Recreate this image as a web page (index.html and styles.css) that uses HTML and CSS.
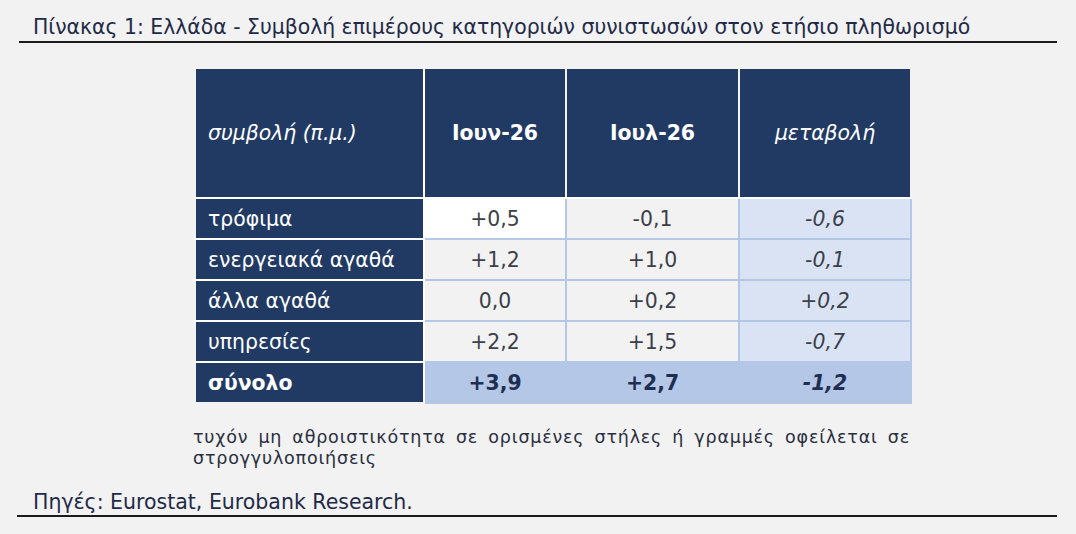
FILE: index.html
```html
<!DOCTYPE html>
<html lang="el">
<head>
<meta charset="utf-8">
<title>Πίνακας 1</title>
<link rel="stylesheet" href="styles.css">
</head>
<body>
<div class="page">
  <div class="title">Πίνακας 1: Ελλάδα - Συμβολή επιμέρους κατηγοριών συνιστωσών στον ετήσιο πληθωρισμό</div>
  <table class="data">
    <colgroup>
      <col class="c1"><col class="c2"><col class="c3"><col class="c4">
    </colgroup>
    <thead>
      <tr>
        <th class="lab it">συμβολή (π.μ.)</th>
        <th class="bold">Ιουν-26</th>
        <th class="bold">Ιουλ-26</th>
        <th class="it">μεταβολή</th>
      </tr>
    </thead>
    <tbody>
      <tr>
        <th class="lab">τρόφιμα</th>
        <td class="v2 first">+0,5</td>
        <td class="v3">-0,1</td>
        <td class="v4">-0,6</td>
      </tr>
      <tr>
        <th class="lab">ενεργειακά αγαθά</th>
        <td class="v2">+1,2</td>
        <td class="v3">+1,0</td>
        <td class="v4">-0,1</td>
      </tr>
      <tr>
        <th class="lab">άλλα αγαθά</th>
        <td class="v2">0,0</td>
        <td class="v3">+0,2</td>
        <td class="v4">+0,2</td>
      </tr>
      <tr>
        <th class="lab">υπηρεσίες</th>
        <td class="v2">+2,2</td>
        <td class="v3">+1,5</td>
        <td class="v4">-0,7</td>
      </tr>
      <tr class="total">
        <th class="lab">σύνολο</th>
        <td>+3,9</td>
        <td>+2,7</td>
        <td class="it">-1,2</td>
      </tr>
    </tbody>
  </table>
  <p class="note">τυχόν μη αθροιστικότητα σε ορισμένες στήλες ή γραμμές οφείλεται σε στρογγυλοποιήσεις</p>
  <div class="source">Πηγές: Eurostat, Eurobank Research.</div>
</div>
</body>
</html>
```

FILE: styles.css
```css
html, body {
  margin: 0;
  padding: 0;
  background: #f2f2f2;
}

body {
  font-family: "DejaVu Sans", "Noto Sans", sans-serif;
  color: #1f2a48;
}

.page {
  width: 1076px;
  height: 534px;
  padding-top: 13px;
  box-sizing: border-box;
}

.title {
  margin-left: 19px;
  width: 1038px;
  box-sizing: border-box;
  padding-left: 14px;
  font-size: 20.4px;
  line-height: 28px;
  border-bottom: 2px solid #1a1a1a;
  white-space: nowrap;
}

.data {
  margin: 24px 0 0 194px;
  border-collapse: collapse;
  table-layout: fixed;
  width: 716px;
  font-size: 20.4px;
}

.c1 { width: 229px; }
.c2 { width: 142px; }
.c3 { width: 173px; }
.c4 { width: 172px; }

.data th,
.data td {
  padding: 0;
  height: 39px;
  text-align: center;
  font-weight: normal;
  border: 2px solid #b4c7e7;
}

.data thead th {
  height: 128px;
  background: #213a64;
  color: #ffffff;
  border: 2px solid #f2f2f2;
  border-bottom-color: #ffffff;
}

.data th.lab {
  text-align: left;
  padding-left: 12px;
  background: #213a64;
  color: #ffffff;
  border: 2px solid #ffffff;
  border-left-color: #f2f2f2;
  white-space: nowrap;
}

.data thead th.lab {
  border-top-color: #f2f2f2;
}

.data .bold {
  font-weight: bold;
}

.data .it {
  font-style: italic;
}

.data td {
  color: #3a3f4a;
}

.data td.v2 {
  background: #f2f2f2;
}

.data td.v2.first {
  background: #ffffff;
}

.data td.v3 {
  background: #f2f2f2;
}

.data td.v4 {
  background: #dae3f3;
  font-style: italic;
}

.data .total td {
  background: #b4c7e7;
  color: #1f2f52;
  font-weight: bold;
}

.data .total th.lab {
  font-weight: bold;
  border-bottom-color: #f2f2f2;
}

.note {
  margin: 23px 0 0 193px;
  width: 717px;
  font-size: 17.5px;
  letter-spacing: 0.8px;
  line-height: 21px;
  text-align: justify;
  color: #2a2f40;
}

.source {
  margin: 20px 0 0 17px;
  width: 1040px;
  box-sizing: border-box;
  padding-left: 16px;
  font-size: 20.5px;
  line-height: 26px;
  border-bottom: 2px solid #1a1a1a;
}
```
